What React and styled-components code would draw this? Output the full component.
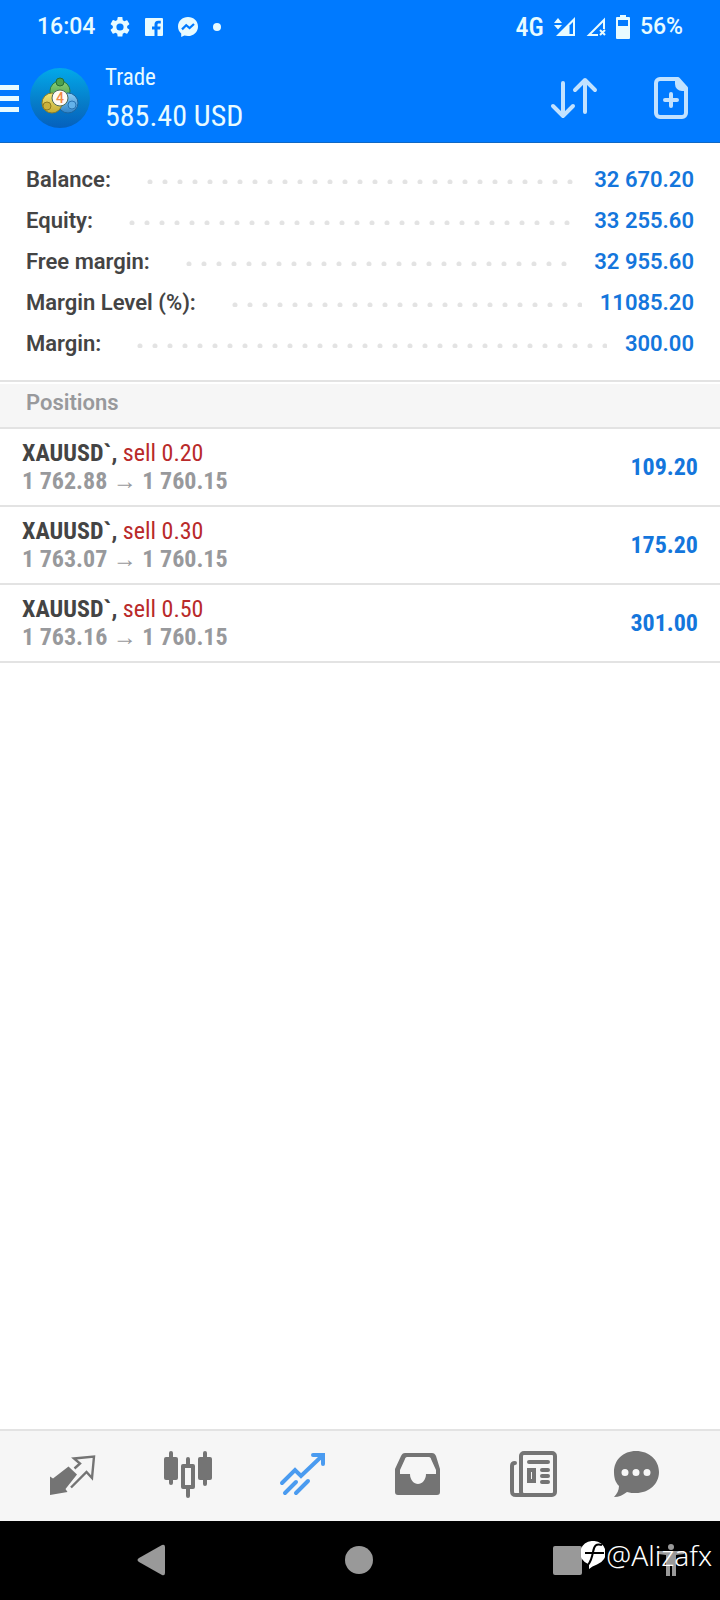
import React from 'react';
import styled, { createGlobalStyle } from 'styled-components';

const GlobalStyle = createGlobalStyle`
    * {
        box-sizing: border-box;
    }

    body {
        margin: 0;
        background: #fff;
        font-family: Roboto, "Liberation Sans", sans-serif;
    }

    button {
        padding: 0;
        border: 0;
        background: none;
        color: inherit;
        display: flex;
    }
`

const condensed = `"Roboto Condensed", "Liberation Sans Narrow", Roboto, sans-serif`;

const Screen = styled.div`
    min-height: 100vh;
    display: flex;
    flex-direction: column;
`

const Top = styled.header`
    background: #007aff;
    color: #e8fbff;
    border-bottom: 1px solid #1068c4;
`

const StatusBar = styled.div`
    height: 54px;
    padding: 0 37px;
    display: flex;
    align-items: center;
    justify-content: space-between;
    font-size: 23px;
    font-weight: 500;
    line-height: 28px;
`

const StatusGroup = styled.div`
    display: flex;
    align-items: center;
    gap: ${props => props.$gap}px;
`

const Network = styled.span`
    font-family: ${condensed};
    font-size: 26px;
    font-weight: 500;
`

const AppBar = styled.div`
    height: 88px;
    padding-right: 32px;
    display: flex;
    align-items: center;
`

const Titles = styled.div`
    flex: 1;
    margin-left: 15px;
    padding-top: 4px;
    font-family: ${condensed};
`

const Title = styled.h1`
    margin: 0;
    font-size: 23px;
    font-weight: 400;
    line-height: 32px;
`

const Profit = styled.div`
    font-size: 30px;
    line-height: 44px;
`

const Actions = styled.div`
    display: flex;
    align-items: center;
    gap: 56px;
    color: #c2e2ff;
`

const Summary = styled.dl`
    margin: 0;
    padding: 16px 26px;
`

const SummaryRow = styled.div`
    height: 41px;
    display: flex;
    align-items: center;
    font-size: 22px;
    font-weight: 600;
    line-height: 27px;
`

const Label = styled.dt`
    color: #444;
`

const Dots = styled.span`
    flex: 1;
    height: 5px;
    margin: 4px 18px 0 36px;
    background: radial-gradient(circle at 3px 3px, #e3e3e3 2px, transparent 3px) 0 0 / 15px 5px repeat-x;
`

const Value = styled.dd`
    margin: 0;
    color: #1476dc;
`

const SectionTitle = styled.h2`
    height: 49px;
    margin: 0;
    padding: 7px 26px 0;
    border: solid #e3e3e3;
    border-width: 2px 0;
    background: #f6f6f6;
    box-shadow: inset 0 2px #fff;
    color: #98999c;
    font-size: 22px;
    font-weight: 600;
    line-height: 27px;
`

const Positions = styled.ul`
    flex: 1;
    margin: 0;
    padding: 0;
    list-style: none;
`

const Position = styled.li`
    height: 78px;
    padding: 0 22px;
    border-bottom: 2px solid #e3e3e3;
    display: flex;
    align-items: center;
    justify-content: space-between;
    font-family: ${condensed};
    font-size: 24px;
    font-weight: 700;
    line-height: 28px;
`

const SymbolName = styled.div`
    color: #444;
`

const Volume = styled.span`
    color: #b92a2a;
    font-weight: 400;
`

const Prices = styled.div`
    color: #98999c;
`

const Result = styled.div`
    color: #1476dc;
`

const TabBar = styled.nav`
    height: 92px;
    padding: 0 60px 2px 49px;
    border-top: 2px solid #e3e3e3;
    background: #f6f6f6;
    display: grid;
    grid-template-columns: repeat(4, 115fr) 103fr 48px;
    align-items: center;
`

const Tab = styled.button`
    && {
        color: ${props => props.$active ? '#4a9bf0' : '#747474'};
    }
`

const SystemBar = styled.div`
    position: relative;
    height: 79px;
    padding: 0 36px 2px 137px;
    background: #000;
    color: #999;
    display: flex;
    align-items: center;
    justify-content: space-between;
`

const SystemEnd = styled.div`
    display: flex;
    gap: 76px;
`

const Watermark = styled.div`
    position: absolute;
    right: 8px;
    top: 17px;
    display: flex;
    align-items: center;
    gap: 1px;
    color: #fff;
    font-family: "Noto Sans", sans-serif;
    font-size: 28px;
    font-weight: 300;
    line-height: 34px;
`

const Svg = ({ w, h, children, ...rest }) => (
    <svg width={w} height={h} viewBox={`0 0 ${w} ${h}`} fill="none" aria-hidden="true" {...rest}>
        {children}
    </svg>
)

const Gear = () => (
    <svg width="20" height="20" viewBox="2 2 20 20" fill="currentColor" aria-hidden="true">
        <path d="M19.14 12.94c.04-.3.06-.61.06-.94s-.02-.64-.07-.94l2.03-1.58a.5.5 0 0 0 .12-.61l-1.92-3.32a.5.5 0 0 0-.59-.22l-2.39.96a7 7 0 0 0-1.62-.94l-.36-2.54A.5.5 0 0 0 13.92 2h-3.84a.5.5 0 0 0-.47.41l-.36 2.54c-.59.24-1.13.57-1.62.94l-2.39-.96a.5.5 0 0 0-.59.22L2.74 8.87a.5.5 0 0 0 .12.61l2.03 1.58c-.05.3-.09.63-.09.94s.02.64.07.94l-2.03 1.58a.5.5 0 0 0-.12.61l1.92 3.32c.12.22.37.29.59.22l2.39-.96c.5.38 1.03.7 1.62.94l.36 2.54c.05.24.24.41.48.41h3.84c.24 0 .44-.17.47-.41l.36-2.54a7 7 0 0 0 1.62-.94l2.39.96c.22.08.47 0 .59-.22l1.92-3.32a.5.5 0 0 0-.12-.61zM12 15.6a3.6 3.6 0 1 1 0-7.2 3.6 3.6 0 0 1 0 7.2z" />
    </svg>
)

const Facebook = () => (
    <Svg w={18} h={18} fill="currentColor">
        <path d="M1 0h16a1 1 0 0 1 1 1v16a1 1 0 0 1-1 1h-4.500v-6.500h2.700l.4-3h-3.100V6.700c0-.9.400-1.300 1.400-1.300h1.900V2.700h-2.600C10.700 2.700 9.500 4.200 9.500 6.400v2.100H7v3h2.500V18H1a1 1 0 0 1-1-1V1a1 1 0 0 1 1-1z" />
    </Svg>
)

const Messenger = () => (
    <Svg w={20} h={20}>
        <path fill="currentColor" d="M10 0C4.400 0 0 4.100 0 9.500c0 2.900 1.200 5.300 3.200 7V20l3.200-1.400c1.100.3 2.300.5 3.600.5 5.600 0 10-4.100 10-9.600S15.600 0 10 0z" />
        <path stroke="#007aff" strokeWidth="2.200" d="M4 12.400 8.200 8.200l3.400 2.900L16 7" />
    </Svg>
)

const SignalFull = () => (
    <Svg w={22} h={20}>
        <path fill="currentColor" d="M0 6 4 1l4 5zM0 8h8l-4 4.500zM2 19 21 0v19z" />
        <path fill="#007aff" d="M15.500 8.500 19 5v12h-3.500z" />
    </Svg>
)

const SignalNone = () => (
    <Svg w={20} h={20} stroke="currentColor" strokeWidth="2">
        <path d="M18 12V3L3 18h9M14 13l5 5M19 13l-5 5" />
    </Svg>
)

const Battery = () => (
    <Svg w={14} h={24}>
        <path fill="currentColor" fillRule="evenodd" d="M4 0h6v2h3a1 1 0 0 1 1 1v20a1 1 0 0 1-1 1H1a1 1 0 0 1-1-1V3a1 1 0 0 1 1-1h3zM2 5v6h10V5z" />
    </Svg>
)

const Logo = () => (
    <Svg w={60} h={60}>
        <defs>
            <linearGradient id="disc" x1="0" y1="0" x2="0" y2="1">
                <stop offset="0" stopColor="#02a9ea" />
                <stop offset="0.600" stopColor="#067bc8" />
                <stop offset="1" stopColor="#0560bd" />
            </linearGradient>
            <linearGradient id="green" x1="0" y1="0" x2="0" y2="1">
                <stop offset="0" stopColor="#8fce78" />
                <stop offset="1" stopColor="#3f9e45" />
            </linearGradient>
            <linearGradient id="yellow" x1="0" y1="0" x2="0" y2="1">
                <stop offset="0" stopColor="#f0e67a" />
                <stop offset="1" stopColor="#c4ab34" />
            </linearGradient>
            <linearGradient id="blue" x1="0" y1="0" x2="0" y2="1">
                <stop offset="0" stopColor="#8fcff5" />
                <stop offset="1" stopColor="#2f83c9" />
            </linearGradient>
        </defs>
        <circle cx="30" cy="30" r="30" fill="url(#disc)" />
        <circle cx="30" cy="23" r="10" fill="url(#green)" stroke="#2c7f42" />
        <circle cx="38" cy="35" r="10" fill="url(#blue)" stroke="#1f669f" />
        <circle cx="22" cy="35" r="10" fill="url(#yellow)" stroke="#8d8027" />
        <circle cx="30" cy="14" r="4" fill="#4da24e" stroke="#256d35" />
        <circle cx="17" cy="38" r="4" fill="#c9b13c" stroke="#8d7a20" />
        <circle cx="42" cy="37" r="4" fill="#63b2ea" stroke="#2a74b3" />
        <circle cx="30" cy="30" r="8" fill="#fffaf5" stroke="#4c6a58" />
        <text x="30" y="35" textAnchor="middle" fontFamily="Roboto, sans-serif" fontSize="14" fontWeight="500" fill="#f08a45">4</text>
    </Svg>
)

const summary = [
    ['Balance:', '32 670.20'],
    ['Equity:', '33 255.60'],
    ['Free margin:', '32 955.60'],
    ['Margin Level (%):', '11085.20'],
    ['Margin:', '300.00'],
]

const positions = [
    { volume: '0.20', open: '1 762.88', result: '109.20' },
    { volume: '0.30', open: '1 763.07', result: '175.20' },
    { volume: '0.50', open: '1 763.16', result: '301.00' },
]

const App = () => {
  return (
    <Screen>
        <GlobalStyle />
        <Top>
            <StatusBar>
                <StatusGroup $gap={15}>
                    <span>16:04</span>
                    <Gear />
                    <Facebook />
                    <Messenger />
                    <Svg w={8} h={8}><circle cx="4" cy="4" r="4" fill="currentColor" /></Svg>
                </StatusGroup>
                <StatusGroup $gap={10}>
                    <Network>4G</Network>
                    <SignalFull />
                    <SignalNone />
                    <Battery />
                    <span>56%</span>
                </StatusGroup>
            </StatusBar>
            <AppBar>
                <button aria-label="Menu">
                    <Svg w={30} h={30}><path fill="currentColor" d="M0 2h19v5H0zM0 13h19v5H0zM0 24h19v5H0z" /></Svg>
                </button>
                <Logo />
                <Titles>
                    <Title>Trade</Title>
                    <Profit>585.40 USD</Profit>
                </Titles>
                <Actions>
                    <button aria-label="Sort">
                        <Svg w={48} h={42} stroke="currentColor" strokeWidth="4" strokeLinecap="round" strokeLinejoin="round">
                            <path d="M13 6v33M3 29l10 10 10-10M35 35V3M25 13 35 3l10 10" />
                        </Svg>
                    </button>
                    <button aria-label="New order">
                        <Svg w={34} h={42}>
                            <path stroke="currentColor" strokeWidth="4" strokeLinejoin="round" d="M6 2h18l8 9v25a4 4 0 0 1-4 4H6a4 4 0 0 1-4-4V6a4 4 0 0 1 4-4z" />
                            <path fill="currentColor" d="M21 2h4l8 9v3h-5a7 7 0 0 1-7-7z" />
                            <path stroke="currentColor" strokeWidth="4" strokeLinecap="round" d="M17 17v12M11 23h12" />
                        </Svg>
                    </button>
                </Actions>
            </AppBar>
        </Top>

        <Summary>
            {
                summary.map(([label, value]) => {
                    return <SummaryRow key={label}>
                        <Label>{label}</Label>
                        <Dots />
                        <Value>{value}</Value>
                    </SummaryRow>
                })
            }
        </Summary>

        <SectionTitle>Positions</SectionTitle>
        <Positions>
            {
                positions.map((item) => {
                    return <Position key={item.volume}>
                        <div>
                            <SymbolName>XAUUSD`, <Volume>sell {item.volume}</Volume></SymbolName>
                            <Prices>{item.open} → 1 760.15</Prices>
                        </div>
                        <Result>{item.result}</Result>
                    </Position>
                })
            }
        </Positions>

        <TabBar>
            <Tab aria-label="Quotes">
                <Svg w={48} h={48}>
                    <path fill="currentColor" d="M1 25.500 4 27.500 19.500 15.500 28 23.500 16.500 38 18.500 41 1 44z" />
                    <path stroke="currentColor" strokeWidth="2.400" d="M22 36.500 37.500 21l5.500 6L45 5.500 25 7.500l6 5-5.500 5" />
                </Svg>
            </Tab>
            <Tab aria-label="Chart">
                <Svg w={48} h={48}>
                    <path stroke="currentColor" strokeWidth="4" strokeLinecap="round" d="M7 2v30M41 2v31M24 8v6M24 37v8" />
                    <rect x="0" y="6" width="14" height="23" rx="2" fill="currentColor" />
                    <rect x="34" y="6" width="14" height="23" rx="2" fill="currentColor" />
                    <rect x="19" y="15" width="10" height="21" stroke="currentColor" strokeWidth="4" strokeLinejoin="round" />
                </Svg>
            </Tab>
            <Tab aria-label="Trade" $active>
                <Svg w={48} h={48} stroke="currentColor" strokeWidth="4" strokeLinecap="round">
                    <path d="m3 32 13-13 6 6L43 5M34 4h10v9M6 42l11-11M17 42l12-12" />
                </Svg>
            </Tab>
            <Tab aria-label="History">
                <Svg w={48} h={48}>
                    <path fill="currentColor" fillRule="evenodd" d="M11 2h27c2 0 3 1 4 3l4 13v23c0 2-1 3-3 3H4c-2 0-3-1-3-3V18L7 5c1-2 2-3 4-3zm2 4c-1 0-2 1-2 2L6 19v4h10c0 6 4 10 8 10s8-4 8-10h10v-4L37 8c0-1-1-2-2-2z" />
                </Svg>
            </Tab>
            <Tab aria-label="News">
                <Svg w={48} h={48} stroke="currentColor" strokeWidth="4" strokeLinecap="round">
                    <rect x="12" y="2" width="34" height="42" rx="3" />
                    <path d="M6 12c-2 0-3 1-3 3v25c0 3 1 4 4 4h8M20 11h19M33 19h6M33 25h6M33 31h6" />
                    <rect x="20" y="19" width="5" height="11" />
                </Svg>
            </Tab>
            <Tab aria-label="Messages">
                <Svg w={48} h={48}>
                    <path fill="currentColor" fillRule="evenodd" d="M24 0c13 0 23 9 23 21s-10 21-23 21c-3 0-6 0-9-1-4 3-8 5-13 5 3-3 5-7 5-11-4-4-5-9-5-14C2 9 11 0 24 0zM13 18a3.500 3.500 0 1 0 0 7 3.500 3.500 0 0 0 0-7zm11 0a3.500 3.500 0 1 0 0 7 3.500 3.500 0 0 0 0-7zm11 0a3.500 3.500 0 1 0 0 7 3.500 3.500 0 0 0 0-7z" />
                </Svg>
            </Tab>
        </TabBar>

        <SystemBar>
            <button aria-label="Back">
                <Svg w={28} h={32} fill="currentColor"><path d="M2 14 25 1q3-1 3 2v26q0 3-3 2L2 18q-3-2 0-4z" /></Svg>
            </button>
            <button aria-label="Home">
                <Svg w={28} h={28}><circle cx="14" cy="14" r="14" fill="currentColor" /></Svg>
            </button>
            <SystemEnd>
                <button aria-label="Recent apps">
                    <Svg w={29} h={32}><rect y="2" width="29" height="29" rx="2" fill="currentColor" /></Svg>
                </button>
                <button aria-label="Accessibility">
                    <Svg w={26} h={32} fill="currentColor"><circle cx="13" cy="3" r="3" /><path d="M0 7h26v3l-8 1v21h-4V21h-2v11H8V11L0 10z" /></Svg>
                </button>
            </SystemEnd>
            <Watermark>
                <Svg w={24} h={28}>
                    <path fill="currentColor" d="M12 0a12 12 0 0 1 4 23.500Q11 25 8 28V23.500A12 12 0 0 1 12 0z" />
                    <path stroke="#000" strokeWidth="2" d="M4 12h19M21 4c-6-2-8 1-9 7-1 6-2 9-5 13" />
                </Svg>
                @Alizafx
            </Watermark>
        </SystemBar>
    </Screen>
  )
}

export default App
